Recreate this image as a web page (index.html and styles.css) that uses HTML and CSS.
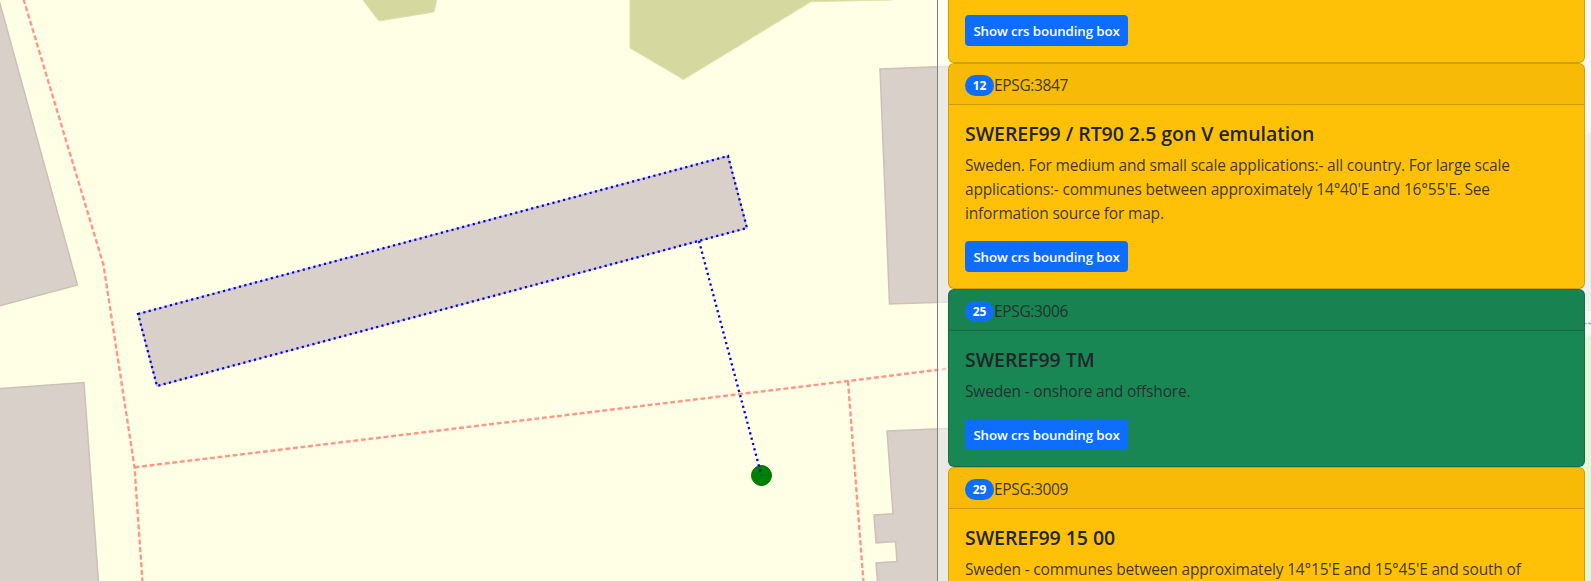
FILE: index.html
```
<!DOCTYPE html>
<html lang="en">
<head>
<meta charset="utf-8">
<title>CRS map</title>
<link rel="stylesheet" href="styles.css">
</head>
<body>
<main class="app">
  <svg class="map" viewBox="0 0 1591 581" width="1591" height="581" aria-hidden="true">
    <rect class="land" width="1591" height="581"/>
    <path class="far" d="M1560 0H1591V581H1560Z"/>
    <path class="block" d="M1560 160L1591 131V311H1560Z"/>
    <path class="grass" d="M1560 581V340L1585 338L1591 335V581Z"/>
    <path class="green" d="M362 -1L379 21L434 12L437 -1Z"/>
    <path class="green" d="M630 -1V48L683.5 79.5L811 1.7L892 0V-1Z"/>
    <path class="building" d="M-1 0L77.5 285L-1 306Z"/>
    <path class="building" d="M-1 388.5L84 382.5L98.5 582H-1Z"/>
    <path class="building" d="M138 314L728 156L747 228L157 386Z"/>
    <path class="building" d="M880 69L1200 56V294L889.5 304Z"/>
    <path class="building" d="M887 431L1200 418V582H877.5L876 563L897 561.5L895.5 541.5L876 543L874 515L893 513.7Z"/>
    <path class="path" d="M23.5 -1L100.500 255L103.500 265L134.500 467L142.500 582"/>
    <path class="path" d="M134.500 467.300L848 381L948 368.500"/>
    <path class="path" d="M848 381L863.500 582"/>
    <circle class="marker" cx="761.5" cy="475.5" r="10"/>
    <path class="measure" d="M138 314L728 156L747 228L157 386Z"/>
    <path class="measure" d="M699 241L761.500 475.500"/>
    <path class="boundary" d="M1583.500 323.500H1591"/>
  </svg>
  <aside class="panel">
    <article class="card card-warning">
      <div class="card-body"><a class="btn"><span class="btn-label">Show crs bounding box</span></a></div>
    </article>
    <article class="card card-warning">
      <header class="card-header"><span class="badge">12</span><span class="code">EPSG:3847</span></header>
      <div class="card-body">
        <h5 class="title">SWEREF99 / RT90 2.5 gon V emulation</h5>
        <p class="text">Sweden. For medium and small scale applications:- all country. For large scale<br>applications:- communes between approximately 14°40'E and 16°55'E. See<br>information source for map.</p>
        <a class="btn"><span class="btn-label">Show crs bounding box</span></a>
      </div>
    </article>
    <article class="card card-success">
      <header class="card-header"><span class="badge">25</span><span class="code">EPSG:3006</span></header>
      <div class="card-body">
        <h5 class="title">SWEREF99 TM</h5>
        <p class="text">Sweden - onshore and offshore.</p>
        <a class="btn"><span class="btn-label">Show crs bounding box</span></a>
      </div>
    </article>
    <article class="card card-warning">
      <header class="card-header"><span class="badge">29</span><span class="code">EPSG:3009</span></header>
      <div class="card-body">
        <h5 class="title">SWEREF99 15 00</h5>
        <p class="text">Sweden - communes between approximately 14°15'E and 15°45'E and south of</p>
      </div>
    </article>
  </aside>
</main>
</body>
</html>
```
FILE: styles.css
```
* { box-sizing: border-box; }
body { margin: 0; font-family: "Open Sans", "Noto Sans", sans-serif; color: #212529; }
.app { position: relative; height: 581px; overflow: hidden; }
.map { display: block; }
.land { fill: #ffffe5; }
.far { fill: #f2efe9; }
.block { fill: #dfdfdf; }
.grass { fill: #cdebb0; }
.green { fill: #d5d9a0; stroke: #dfe2ae; stroke-width: 1; }
.building { fill: #d9d0c9; stroke: #cdc1b5; stroke-width: 1.5; }
.path { fill: none; stroke: #fe978b; stroke-width: 2.4; stroke-dasharray: 5 2.6; }
.marker { fill: #008000; stroke: #006a00; stroke-width: 1; }
.measure { fill: none; stroke: #0000ff; stroke-width: 2.3; stroke-dasharray: 2.2 3.3; }
.boundary { fill: none; stroke: #3a3aff; stroke-width: 1.5; stroke-dasharray: 3 1.5; }
.panel { position: absolute; top: 0; right: 0; width: 654px; height: 581px; padding: 0 6px 0 10px; border-left: 1px solid #7f7f7f; background: rgba(255, 255, 255, .5); display: flex; flex-direction: column; overflow: hidden; }
.card { flex: none; border: 1px solid rgba(0, 0, 0, .176); border-radius: 6px; background-clip: border-box; }
.card:first-child { border-top: 0; border-top-left-radius: 0; border-top-right-radius: 0; margin-top: -1px; }
.card-warning { background-color: #ffc107; }
.card-success { background-color: #198754; }
.card-header { display: flex; align-items: center; height: 41px; padding: 8px 16px; border-bottom: 1px solid rgba(0, 0, 0, .176); background: rgba(0, 0, 0, .03); border-radius: 5px 5px 0 0; }
.card-body { padding: 16px; }
.badge { width: 29px; height: 21px; margin-top: 2px; border-radius: 11px; background: #0d6efd; color: #fff; font-size: 12px; font-weight: 700; line-height: 21px; text-align: center; }
.code { font-size: 15.500px; line-height: 24px; letter-spacing: -.35px; padding-top: 1px; color: rgba(33, 37, 41, .88); }
.title { margin: 0 0 8px; padding-top: 1px; height: 24px; font-size: 19.500px; font-weight: 600; line-height: 24px; letter-spacing: -.05px; white-space: nowrap; }
.text { margin: 0 0 16px; font-size: 15.500px; line-height: 24px; letter-spacing: -.18px; white-space: nowrap; color: rgba(33, 37, 41, .88); }
.btn { display: flex; align-items: center; justify-content: center; width: 163px; height: 31px; padding-top: 1px; border-radius: 4px; background: #0d6efd; color: #fff; font-size: 13.300px; font-weight: 600; line-height: 21px; letter-spacing: -.12px; white-space: nowrap; }
```
